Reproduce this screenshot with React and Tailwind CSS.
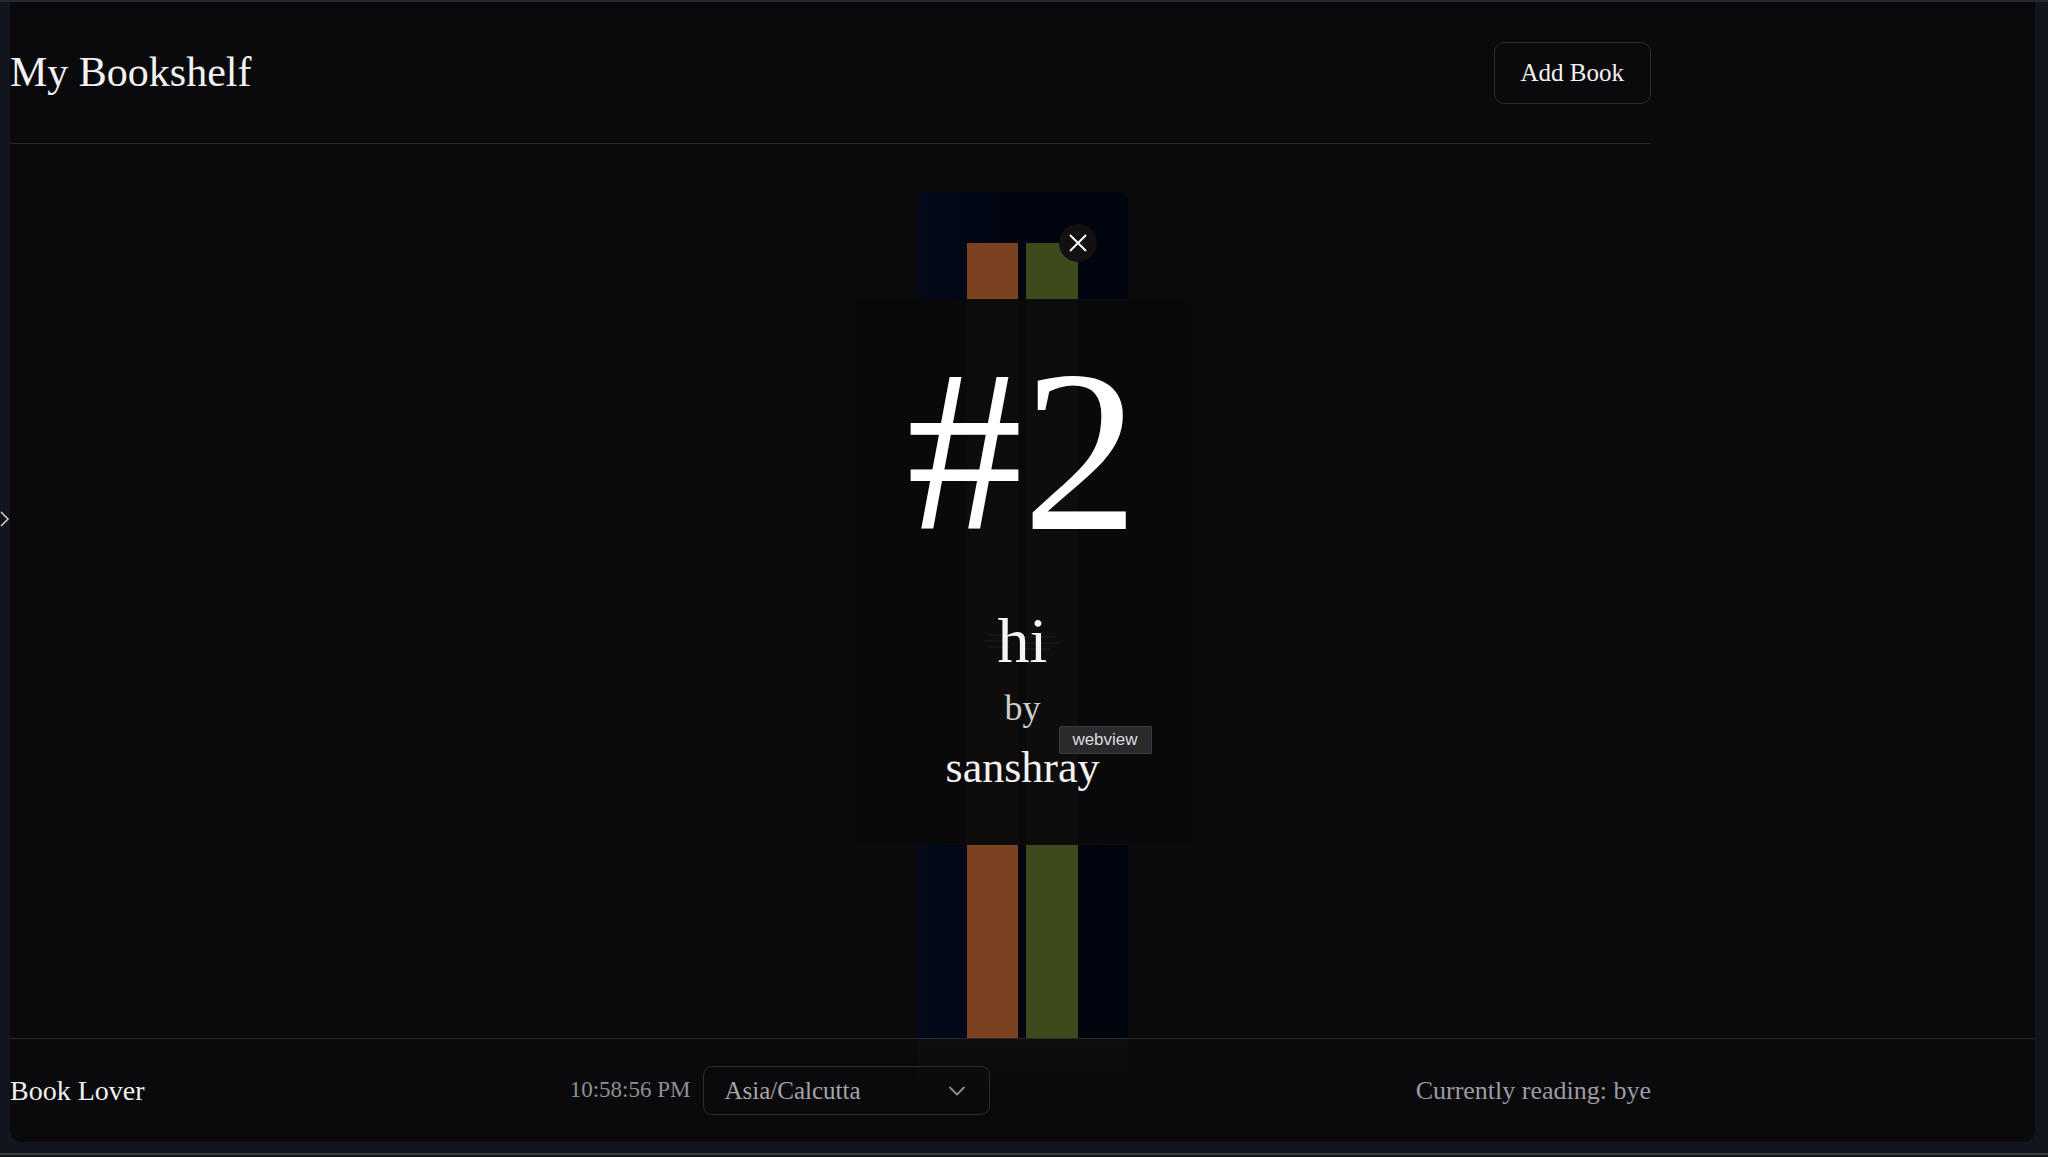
import React from 'react';
import { ChevronDown, X } from 'lucide-react';

const serif = { fontFamily: '"Liberation Serif", "Times New Roman", serif' };

const Shelf = () => (
  <div className="flex-1 flex justify-center pt-[48px] overflow-hidden">
    <div className="relative w-[211px] rounded-t-[10px] bg-gradient-to-r from-[#020a1c] via-[#00050f] to-[#00040d] pt-[51px] px-[50px] flex gap-2">
      <div className="w-[51px] h-full bg-[#7b4121]" />
      <div className="w-[52px] h-full bg-[#3d4a1b]" />
      {/* close */}
      <button className="absolute left-[142px] top-[32px] w-[38px] h-[38px] rounded-full bg-[#121010] flex items-center justify-center text-white">
        <X size={30} strokeWidth={1.5} />
      </button>
    </div>
  </div>
);

const BookOverlay = () => (
  <div className="absolute left-1/2 -translate-x-1/2 top-[155px] w-[334px] h-[546px] bg-[#0a0a0c]/95 border-b border-[#0d0d0f] flex flex-col items-center pt-[36px]">
    <div className="text-[232px] leading-none text-white">#2</div>

    {/* faint icon under the title */}
    <svg className="absolute left-[125px] top-[328px]" width="80" height="30" viewBox="0 0 80 30" fill="none">
      <path d="M8 8h20M4 14h24M8 20h20M44 10h30M44 16h34M44 22h24" stroke="#151517" strokeWidth="2" strokeLinecap="round" />
    </svg>

    <div className="mt-[42px] text-[64px] leading-none text-[#f4f4f4] relative">hi</div>
    <div className="mt-[17px] text-[36px] leading-none text-[#cdcdcf]">by</div>
    <div className="mt-[20px] text-[44px] leading-none text-[#f2f2f2]">sanshray</div>

    <div
      className="absolute left-[203px] top-[427px] w-[93px] h-[28px] rounded-[2px] bg-[#2a2a2c] border border-[#3b3b3e] flex items-center justify-center text-[17px] text-[#dcdcdc]"
      style={{ fontFamily: '"Liberation Sans", Arial, sans-serif' }}
    >
      webview
    </div>
  </div>
);

export default function App() {
  return (
    <div className="relative w-full h-[1157px] bg-[#13151c] border-t-2 border-[#252832] overflow-hidden" style={serif}>
      {/* side toggle */}
      <svg className="absolute left-0 top-[508px]" width="10" height="18" viewBox="0 0 10 18" fill="none">
        <path d="M1 2l7 7-7 7" stroke="#d2d2d6" strokeWidth="1.5" />
      </svg>

      <div className="ml-[10px] w-[2025px] h-[1140px] rounded-b-[12px] bg-[#0a0a0c] flex flex-col overflow-hidden">
        {/* header */}
        <header className="w-[1641px] h-[142px] shrink-0 flex items-center justify-between border-b border-[#262629]">
          <h1 className="text-[42px] leading-none text-[#f2f2f2] -mt-[2px]">My Bookshelf</h1>
          <button className="h-[62px] px-[26px] rounded-[10px] border border-[#2c2c2f] text-[25px] text-[#f2f2f2]">
            Add Book
          </button>
        </header>

        {/* main */}
        <main className="relative flex-1 flex flex-col overflow-hidden">
          <Shelf />
          <BookOverlay />
        </main>

        {/* footer */}
        <footer className="relative h-[104px] shrink-0 border-t border-[#29292c]">
          <div className="absolute left-[907px] top-0 w-[211px] h-[55px] bg-gradient-to-b from-[#0e0e11] to-transparent" />
          <div className="relative w-[1641px] h-full flex items-center justify-between">
            <span className="text-[28px] text-[#f0f0f0]">Book Lover</span>
            <div className="flex items-center gap-[13px]">
              <span className="text-[23px] text-[#8f8f94]">10:58:56 PM</span>
              <button className="w-[287px] h-[49px] rounded-[9px] border border-[#2c2c30] pl-[20px] pr-[18px] flex items-center justify-between text-[25px] text-[#a5a5aa]">
                <span>Asia/Calcutta</span>
                <ChevronDown size={28} strokeWidth={1.6} className="text-[#8a8a8f]" />
              </button>
            </div>
            <span className="text-[26px] text-[#9c9ca2]">Currently reading: bye</span>
          </div>
        </footer>
      </div>

      <div className="absolute left-0 right-0 bottom-[2px] h-[2px] bg-[#3a3c42]" />
    </div>
  );
}
